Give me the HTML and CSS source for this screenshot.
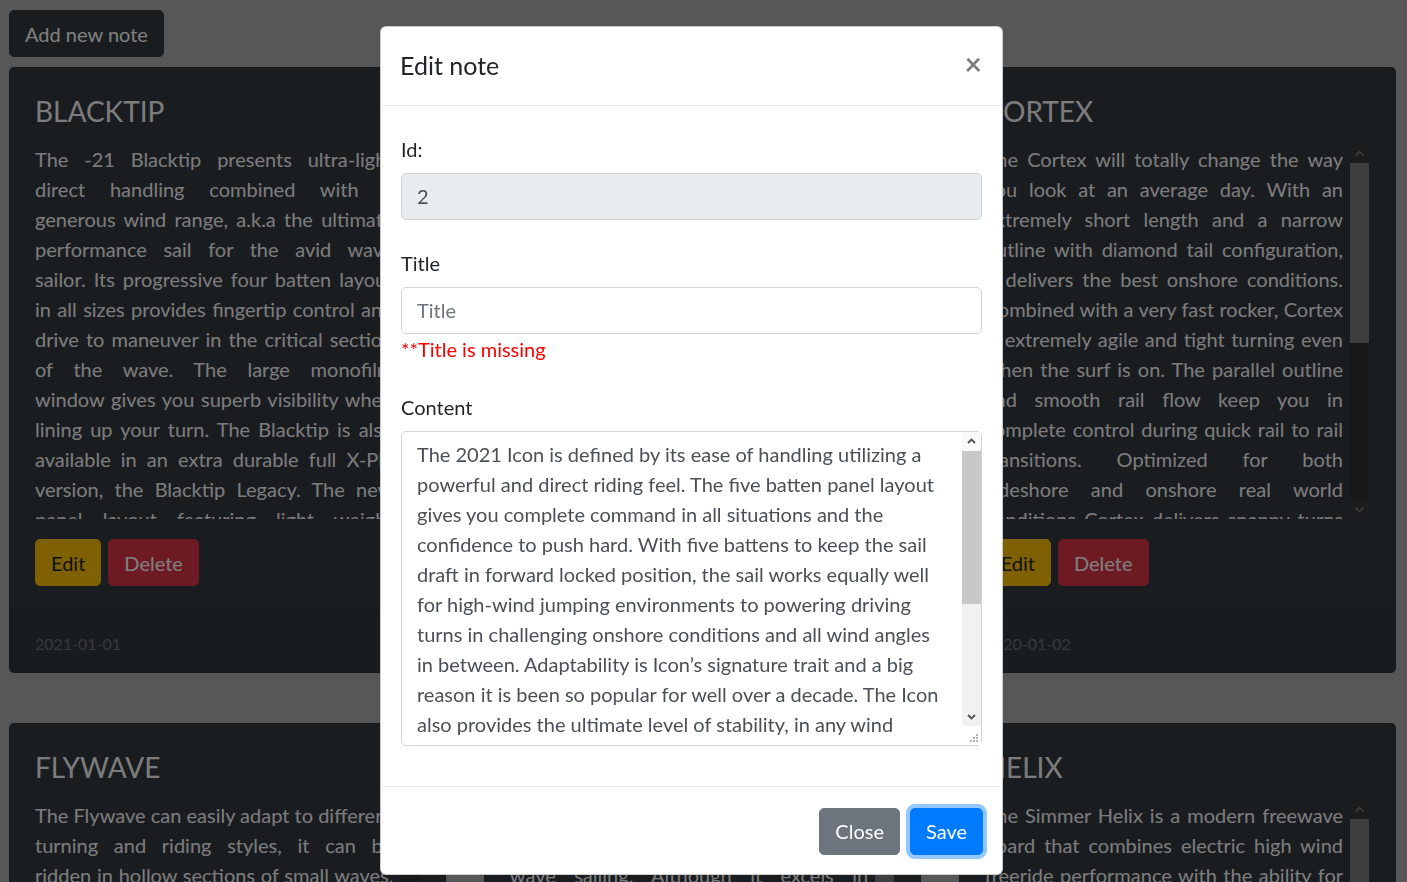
FILE: index.html
```html
<!DOCTYPE html>
<html lang="en">
<head>
<meta charset="utf-8">
<title>Notes</title>
<link rel="stylesheet" href="styles.css">
</head>
<body>
<div class="page">
  <div class="toolbar">
    <button class="btn btn-dark">Add new note</button>
  </div>
  <div class="deck">
    <div class="card">
      <div class="card-body">
        <h4 class="card-title">BLACKTIP</h4>
        <div class="scroll-area">
          <div class="card-text">The -21 Blacktip presents ultra-light<br>
direct handling combined with a<br>
generous wind range, a.k.a the ultimate<br>
performance sail for the avid wave<br>
sailor. Its progressive four batten layout<br>
in all sizes provides fingertip control and<br>
drive to maneuver in the critical section<br>
of the wave. The large monofilm<br>
window gives you superb visibility when<br>
lining up your turn. The Blacktip is also<br>
available in an extra durable full X-Ply<br>
version, the Blacktip Legacy. The new<br>
panel layout featuring light weight<br>
X-Ply in the leech area keeps the sail stable and balanced, while the refined luff curve gives a soft and forgiving feel in gusty conditions. Whether you are riding onshore mush or clean down-the-line waves, the Blacktip is the sail that lets you focus on the wave and forget about the rig.</div>
          <div class="vscroll dark">
            <span class="sb-btn up"></span>
            <span class="sb-track"><span class="sb-thumb" style="height:170px"></span></span>
            <span class="sb-btn down"></span>
          </div>
        </div>
        <div class="actions">
          <button class="btn btn-warning">Edit</button>
          <button class="btn btn-danger">Delete</button>
        </div>
      </div>
      <div class="card-footer"><small>2021-01-01</small></div>
    </div>
    <div class="card">
      <div class="card-body">
        <h4 class="card-title">ICON</h4>
        <div class="scroll-area">
          <div class="card-text">The 2021 Icon is defined by its ease of handling utilizing a powerful and direct riding feel. The five batten panel layout gives you complete command in all situations and the confidence to push hard. With five battens to keep the sail draft in forward locked position, the sail works equally well for high-wind jumping environments to powering driving turns in challenging onshore conditions and all wind angles in between. Adaptability is Icon’s signature trait and a big reason it is been so popular for well over a decade. The Icon also provides the ultimate level of stability, in any wind.</div>
          <div class="vscroll dark">
            <span class="sb-btn up"></span>
            <span class="sb-track"><span class="sb-thumb" style="height:220px"></span></span>
            <span class="sb-btn down"></span>
          </div>
        </div>
        <div class="actions">
          <button class="btn btn-warning">Edit</button>
          <button class="btn btn-danger">Delete</button>
        </div>
      </div>
      <div class="card-footer"><small>2021-01-02</small></div>
    </div>
    <div class="card">
      <div class="card-body">
        <h4 class="card-title">CORTEX</h4>
        <div class="scroll-area">
          <div class="card-text">The Cortex will totally change the way<br>
you look at an average day. With an<br>
extremely short length and a narrow<br>
outline with diamond tail configuration,<br>
it delivers the best onshore conditions.<br>
Combined with a very fast rocker, Cortex<br>
is extremely agile and tight turning even<br>
when the surf is on. The parallel outline<br>
and smooth rail flow keep you in<br>
complete control during quick rail to rail<br>
transitions. Optimized for both<br>
sideshore and onshore real world<br>
conditions Cortex delivers snappy turns<br>
and effortless speed in the smallest waves. The compact volume distribution keeps the board loose under your feet, while the double concave bottom releases water quickly for a lively and responsive ride.</div>
          <div class="vscroll dark">
            <span class="sb-btn up"></span>
            <span class="sb-track"><span class="sb-thumb" style="height:180px"></span></span>
            <span class="sb-btn down"></span>
          </div>
        </div>
        <div class="actions">
          <button class="btn btn-warning">Edit</button>
          <button class="btn btn-danger">Delete</button>
        </div>
      </div>
      <div class="card-footer"><small>2020-01-02</small></div>
    </div>
    <div class="card">
      <div class="card-body">
        <h4 class="card-title">FLYWAVE</h4>
        <div class="scroll-area">
          <div class="card-text">The Flywave can easily adapt to different<br>
turning and riding styles, it can be<br>
ridden in hollow sections of small waves,<br>
as well as in big and powerful surf. The moderate rocker line gives early planing and good speed, while the tail shape provides grip and drive through the bottom turn. It is a true all-rounder for riders who sail in many different spots and conditions throughout the year.</div>
          <div class="vscroll dark">
            <span class="sb-btn up"></span>
            <span class="sb-track"><span class="sb-thumb" style="height:50px"></span></span>
            <span class="sb-btn down"></span>
          </div>
        </div>
        <div class="actions">
          <button class="btn btn-warning">Edit</button>
          <button class="btn btn-danger">Delete</button>
        </div>
      </div>
      <div class="card-footer"><small>2021-01-03</small></div>
    </div>
    <div class="card">
      <div class="card-body">
        <h4 class="card-title">QUANTUM</h4>
        <div class="scroll-area">
          <div class="card-text">The Quantum is a compact and radical<br>
board designed for pure down-the-line<br>
wave sailing. Although it excels in<br>
clean sideshore conditions, it is also easy to ride in onshore conditions thanks to its forgiving rails and loose tail. The board is quick to plane and stays in control at high speed.</div>
          <div class="vscroll dark">
            <span class="sb-btn up"></span>
            <span class="sb-track"><span class="sb-thumb" style="height:260px"></span></span>
            <span class="sb-btn down"></span>
          </div>
        </div>
        <div class="actions">
          <button class="btn btn-warning">Edit</button>
          <button class="btn btn-danger">Delete</button>
        </div>
      </div>
      <div class="card-footer"><small>2020-01-03</small></div>
    </div>
    <div class="card">
      <div class="card-body">
        <h4 class="card-title">HELIX</h4>
        <div class="scroll-area">
          <div class="card-text">The Simmer Helix is a modern freewave<br>
board that combines electric high wind<br>
freeride performance with the ability for<br>
radical wave riding. Its generous volume makes it easy to get going in marginal winds, and the smooth rocker line keeps the board fast and free on the open water. When the waves come, the rounded pin tail allows for tight turns and quick direction changes.</div>
          <div class="vscroll dark">
            <span class="sb-btn up"></span>
            <span class="sb-track"><span class="sb-thumb" style="height:200px"></span></span>
            <span class="sb-btn down"></span>
          </div>
        </div>
        <div class="actions">
          <button class="btn btn-warning">Edit</button>
          <button class="btn btn-danger">Delete</button>
        </div>
      </div>
      <div class="card-footer"><small>2020-01-04</small></div>
    </div>
  </div>
</div>

<div class="modal-backdrop"></div>
<div class="modal">
  <div class="modal-dialog">
    <div class="modal-content">
      <div class="modal-header">
        <h5 class="modal-title">Edit note</h5>
        <button class="close" aria-label="Close">×</button>
      </div>
      <div class="modal-body">
        <div class="form-group">
          <label>Id:</label>
          <input class="form-control" type="text" value="2" readonly>
        </div>
        <div class="form-group">
          <label>Title</label>
          <input class="form-control" type="text" placeholder="Title">
          <div class="error">**Title is missing</div>
        </div>
        <div class="form-group">
          <label>Content</label>
          <div class="textarea-wrap">
            <textarea class="form-control">The 2021 Icon is defined by its ease of handling utilizing a powerful and direct riding feel. The five batten panel layout gives you complete command in all situations and the confidence to push hard. With five battens to keep the sail draft in forward locked position, the sail works equally well for high-wind jumping environments to powering driving turns in challenging onshore conditions and all wind angles in between. Adaptability is Icon’s signature trait and a big reason it is been so popular for well over a decade. The Icon also provides the ultimate level of stability, in any wind range, making it the perfect choice for riders who want a single sail that handles everything from light-wind bump and jump sessions to full-on storm days. The panel layout uses lightweight X-Ply reinforcement in the high-stress areas.</textarea>
            <div class="vscroll light ta-scroll">
              <span class="sb-btn up"></span>
              <span class="sb-track"><span class="sb-thumb" style="height:153px"></span></span>
              <span class="sb-btn down"></span>
              <span class="sb-corner">
                <svg width="19" height="19" viewBox="0 0 19 19"><g fill="#b4b4b4"><rect x="14" y="8" width="2" height="2"/><rect x="11" y="11" width="2" height="2"/><rect x="14" y="11" width="2" height="2"/><rect x="8" y="14" width="2" height="2"/><rect x="11" y="14" width="2" height="2"/><rect x="14" y="14" width="2" height="2"/></g></svg>
              </span>
            </div>
          </div>
        </div>
      </div>
      <div class="modal-footer">
        <button class="btn btn-secondary">Close</button>
        <button class="btn btn-primary is-focused">Save</button>
      </div>
    </div>
  </div>
</div>
</body>
</html>
```

FILE: styles.css
```css
html, body {
  margin: 0;
  height: 100%;
  overflow: hidden;
}

body {
  background: #aeaeae;
  font-family: "Segoe UI", Lato, "Noto Sans", sans-serif;
  font-size: 20px;
  line-height: 1.5;
  color: #212529;
}

*, *::before, *::after {
  box-sizing: border-box;
}

.page {
  padding: 10px 11px 0 9px;
}

.toolbar {
  display: flex;
}

/* Buttons */
.btn {
  font-family: inherit;
  font-size: 20px;
  line-height: 30px;
  padding: 7.5px 15px;
  border: 1px solid transparent;
  border-radius: 5px;
  cursor: pointer;
}

.btn-dark {
  background: #343a40;
  border-color: #343a40;
  color: #fff;
}

.btn-warning {
  background: #ffc107;
  border-color: #ffc107;
  color: #212529;
}

.btn-danger {
  background: #dc3545;
  border-color: #dc3545;
  color: #fff;
}

.btn-secondary {
  background: #6c757d;
  border-color: #6c757d;
  color: #fff;
}

.btn-primary {
  background: #007bff;
  border-color: #007bff;
  color: #fff;
}

.btn-primary.is-focused {
  box-shadow: 0 0 0 4px rgba(38, 143, 255, 0.5);
}

/* Cards */
.deck {
  margin-top: 10px;
  display: grid;
  grid-template-columns: repeat(3, 1fr);
  column-gap: 37.5px;
  row-gap: 50px;
}

.card {
  background: #343a40;
  color: #f8f9fa;
  border: 1px solid rgba(0, 0, 0, 0.125);
  border-radius: 5px;
  display: flex;
  flex-direction: column;
}

.card-body {
  padding: 25px;
}

.card-title {
  margin: 0 0 15px;
  font-size: 28px;
  font-weight: 400;
  line-height: 36px;
}

.scroll-area {
  display: flex;
  height: 375px;
  margin-right: 1px;
}

.card-text {
  flex: 1;
  min-width: 0;
  overflow: hidden;
  text-align: justify;
  text-align-last: justify;
  padding-right: 7px;
}

/* Scrollbars */
.vscroll {
  width: 19px;
  flex: none;
  display: flex;
  flex-direction: column;
}

.sb-btn {
  height: 19px;
  flex: none;
  background-repeat: no-repeat;
  background-position: center;
}

.sb-track {
  flex: 1;
  display: flex;
  flex-direction: column;
}

.sb-thumb {
  display: block;
  flex: none;
}

.vscroll.dark .sb-btn {
  background-color: #36383c;
}

.vscroll.dark .sb-track {
  background: #2e3034;
}

.vscroll.dark .sb-thumb {
  background: #7b7d81;
}

.vscroll.dark .sb-btn.up {
  background-image: url("data:image/svg+xml,%3Csvg xmlns='http://www.w3.org/2000/svg' width='19' height='19'%3E%3Cpath d='M5.5 11.5l4-4 4 4' fill='none' stroke='%23707276' stroke-width='1.8'/%3E%3C/svg%3E");
}

.vscroll.dark .sb-btn.down {
  background-image: url("data:image/svg+xml,%3Csvg xmlns='http://www.w3.org/2000/svg' width='19' height='19'%3E%3Cpath d='M5.5 7.5l4 4 4-4' fill='none' stroke='%23707276' stroke-width='1.8'/%3E%3C/svg%3E");
}

.vscroll.light .sb-btn {
  background-color: #f1f1f1;
}

.vscroll.light .sb-btn.up {
  background-color: #f9f9f9;
  background-image: url("data:image/svg+xml,%3Csvg xmlns='http://www.w3.org/2000/svg' width='19' height='19'%3E%3Cpath d='M6 11l3.5-3.5L13 11' fill='none' stroke='%23505050' stroke-width='1.8'/%3E%3C/svg%3E");
}

.vscroll.light .sb-btn.down {
  background-image: url("data:image/svg+xml,%3Csvg xmlns='http://www.w3.org/2000/svg' width='19' height='19'%3E%3Cpath d='M6 8l3.5 3.5L13 8' fill='none' stroke='%23505050' stroke-width='1.8'/%3E%3C/svg%3E");
}

.vscroll.light .sb-track {
  background: #f1f1f1;
}

.vscroll.light .sb-thumb {
  background: #c8c8c8;
}

.sb-corner {
  display: block;
  height: 19px;
  flex: none;
  background: #fff;
}

.sb-corner svg {
  display: block;
}

.actions {
  margin-top: 20px;
  display: flex;
  gap: 7px;
}

.card-footer {
  padding: 15px 25px;
  background: rgba(0, 0, 0, 0.03);
  border-top: 1px solid rgba(0, 0, 0, 0.125);
  color: #6c757d;
}

.card-footer small {
  font-size: 16px;
}

/* Modal */
.modal-backdrop {
  position: fixed;
  inset: 0;
  background: rgba(0, 0, 0, 0.5);
}

.modal {
  position: fixed;
  inset: 0;
  padding-right: 24px;
}

.modal-dialog {
  width: 623px;
  margin: 26px auto 0;
}

.modal-content {
  background: #fff;
  border: 1px solid rgba(0, 0, 0, 0.2);
  border-radius: 6px;
}

.modal-header {
  display: flex;
  align-items: center;
  justify-content: space-between;
  padding: 20px 20px 20px 19px;
  border-bottom: 1px solid #e9ecef;
}

.modal-title {
  margin: 0;
  font-size: 25px;
  font-weight: 400;
  line-height: 37.5px;
}

.close {
  background: none;
  border: 0;
  padding: 0;
  margin-bottom: 6px;
  font-family: inherit;
  font-size: 30px;
  font-weight: 700;
  line-height: 1;
  color: #000;
  opacity: 0.5;
  cursor: pointer;
}

.modal-body {
  padding: 20px;
}

.form-group {
  margin-bottom: 20px;
}

.form-group label {
  display: block;
  padding-top: 8px;
  margin-bottom: 9px;
}

.form-control {
  display: block;
  width: 100%;
  height: 47px;
  padding: 7.5px 15px;
  font-family: inherit;
  font-size: 20px;
  line-height: 30px;
  color: #495057;
  background: #fff;
  border: 1px solid #ced4da;
  border-radius: 5px;
}

.form-control::placeholder {
  color: #6c757d;
}

.form-control[readonly] {
  background: #e9ecef;
}

.error {
  color: #ff0000;
  margin-bottom: 1px;
}

.textarea-wrap {
  position: relative;
}

textarea.form-control {
  height: 315px;
  resize: none;
  overflow: hidden;
  padding-right: 34px;
}

.ta-scroll {
  position: absolute;
  top: 1px;
  right: 1px;
  bottom: 1px;
}

.modal-footer {
  display: flex;
  justify-content: flex-end;
  align-items: center;
  padding: 16px 14px 14px 15px;
  border-top: 1px solid #e9ecef;
}

.modal-footer .btn {
  margin: 5px;
}
```
